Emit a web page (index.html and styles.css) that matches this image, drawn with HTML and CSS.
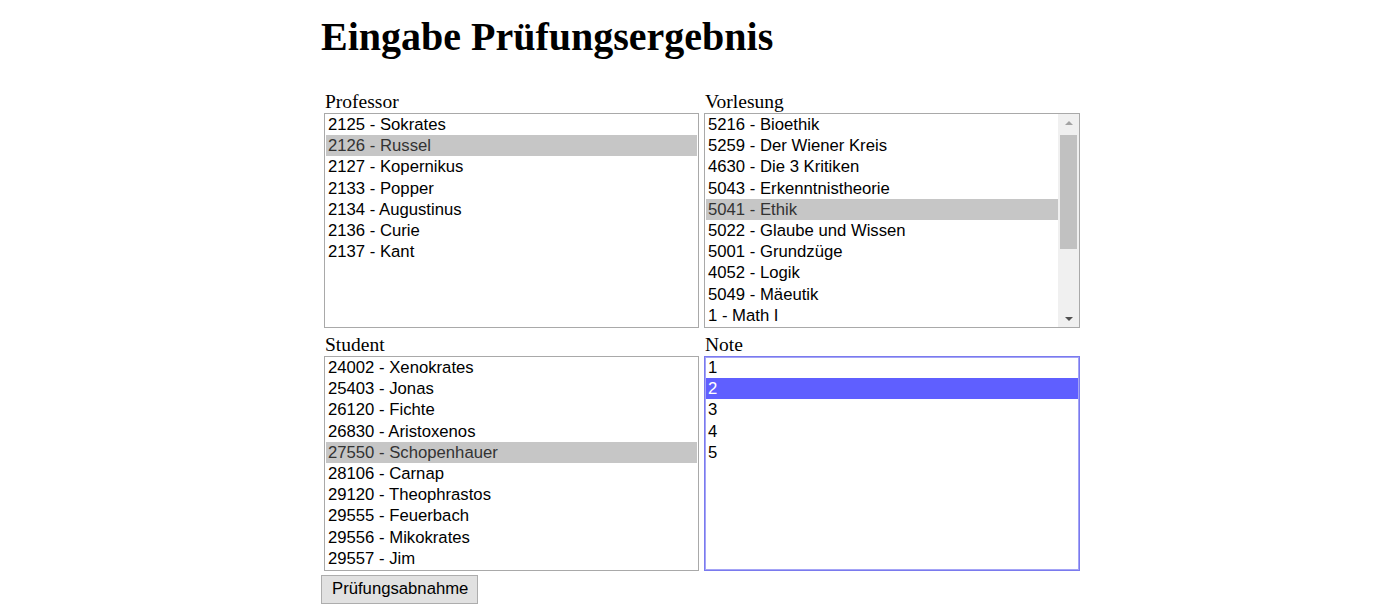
FILE: index.html
```html
<!DOCTYPE html>
<html lang="de">
<head>
<meta charset="utf-8">
<title>Eingabe Prüfungsergebnis</title>
<link rel="stylesheet" href="styles.css">
</head>
<body>
<div class="page">
  <h1 class="title">Eingabe Prüfungsergebnis</h1>
  <div class="form">
    <div class="field">
      <div class="label">Professor</div>
      <div class="listbox">
        <div class="opt">2125 - Sokrates</div>
        <div class="opt sel">2126 - Russel</div>
        <div class="opt">2127 - Kopernikus</div>
        <div class="opt">2133 - Popper</div>
        <div class="opt">2134 - Augustinus</div>
        <div class="opt">2136 - Curie</div>
        <div class="opt">2137 - Kant</div>
      </div>
    </div>
    <div class="field">
      <div class="label">Vorlesung</div>
      <div class="listbox scrolling">
        <div class="opts">
          <div class="opt">5216 - Bioethik</div>
          <div class="opt">5259 - Der Wiener Kreis</div>
          <div class="opt">4630 - Die 3 Kritiken</div>
          <div class="opt">5043 - Erkenntnistheorie</div>
          <div class="opt sel">5041 - Ethik</div>
          <div class="opt">5022 - Glaube und Wissen</div>
          <div class="opt">5001 - Grundzüge</div>
          <div class="opt">4052 - Logik</div>
          <div class="opt">5049 - Mäeutik</div>
          <div class="opt">1 - Math I</div>
        </div>
        <div class="scrollbar">
          <div class="arrow up"></div>
          <div class="track"><div class="thumb"></div></div>
          <div class="arrow down"></div>
        </div>
      </div>
    </div>
    <div class="field">
      <div class="label">Student</div>
      <div class="listbox">
        <div class="opt">24002 - Xenokrates</div>
        <div class="opt">25403 - Jonas</div>
        <div class="opt">26120 - Fichte</div>
        <div class="opt">26830 - Aristoxenos</div>
        <div class="opt sel">27550 - Schopenhauer</div>
        <div class="opt">28106 - Carnap</div>
        <div class="opt">29120 - Theophrastos</div>
        <div class="opt">29555 - Feuerbach</div>
        <div class="opt">29556 - Mikokrates</div>
        <div class="opt">29557 - Jim</div>
      </div>
    </div>
    <div class="field">
      <div class="label">Note</div>
      <div class="listbox focused">
        <div class="opt">1</div>
        <div class="opt active">2</div>
        <div class="opt">3</div>
        <div class="opt">4</div>
        <div class="opt">5</div>
      </div>
    </div>
  </div>
  <button class="submit" type="button">Prüfungsabnahme</button>
</div>
</body>
</html>
```

FILE: styles.css
```css
html, body {
  margin: 0;
  padding: 0;
  background: #ffffff;
}

body {
  font-family: "Liberation Serif", "Times New Roman", serif;
  color: #000000;
}

.page {
  width: 758px;
  margin: 0 auto;
}

.title {
  font-size: 40px;
  font-weight: bold;
  line-height: 46px;
  margin: 14px 0 0 0;
}

.form {
  display: grid;
  grid-template-columns: 375px 376px;
  column-gap: 5px;
  row-gap: 6px;
  padding-left: 3px;
  margin-top: 31px;
}

.field {
  display: flex;
  flex-direction: column;
}

.label {
  font-size: 19.5px;
  line-height: 22px;
  padding-left: 1px;
}

.listbox {
  box-sizing: border-box;
  height: 215px;
  border: 1px solid #a9a9a9;
  font-family: "Liberation Sans", Arial, sans-serif;
  font-size: 16.7px;
  line-height: 21.2px;
  padding: 0 1px;
  overflow: hidden;
  color: #000000;
}

.opt {
  padding-left: 2px;
  white-space: nowrap;
}

.opt.sel {
  background: #c6c6c6;
  color: #333333;
}

.listbox.focused {
  border: 1px solid #7a7aee;
  box-shadow: inset 0 0 0 1px #a4a4f6;
  padding: 0 1px;
}

.opt.active {
  background: #5f5fff;
  color: #ffffff;
}

.listbox.scrolling {
  display: flex;
  padding-right: 0;
}

.opts {
  flex: 1;
}

.scrollbar {
  width: 21px;
  display: flex;
  flex-direction: column;
  background: #f0f0f0;
}

.arrow {
  height: 17px;
  display: flex;
  align-items: center;
  justify-content: center;
}

.arrow.up::before {
  content: "";
  border-left: 4px solid transparent;
  border-right: 4px solid transparent;
  border-bottom: 4px solid #a3a3a3;
}

.arrow.down::before {
  content: "";
  border-left: 4px solid transparent;
  border-right: 4px solid transparent;
  border-top: 4px solid #505050;
}

.track {
  flex: 1;
  padding: 4px 2px 0 2px;
}

.thumb {
  height: 114px;
  background: #c1c1c1;
}

.submit {
  margin-top: 4px;
  font-family: "Liberation Sans", Arial, sans-serif;
  font-size: 16.7px;
  line-height: 20px;
  padding: 3px 9px 4px 10px;
  background: #e1e1e1;
  border: 1px solid #adadad;
  color: #000000;
  border-radius: 0;
}
```
